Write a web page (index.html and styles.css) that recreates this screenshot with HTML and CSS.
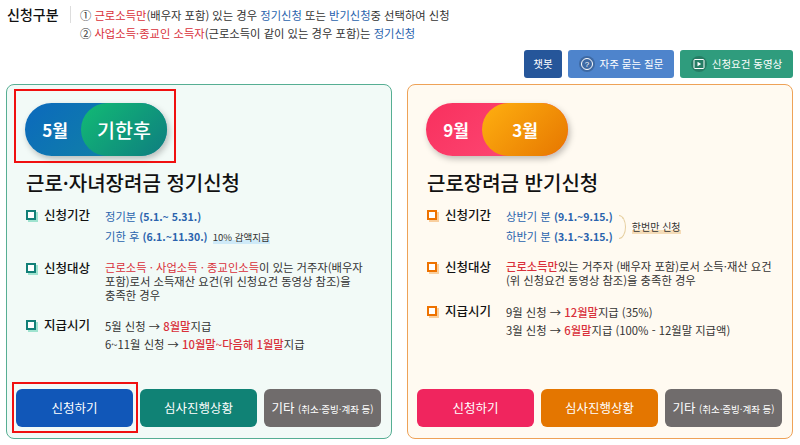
FILE: index.html
```html
<!DOCTYPE HTML>
<html lang="ko">
  <head>
  <title>신청구분</title>
  <meta charset="utf-8">
  <link rel="stylesheet" href="styles.css">
  </head>

  <body>

  <div class="top">
    <div class="topLabel">신청구분</div>
    <div class="topNotes">
      <p>① <span class="red">근로소득만</span>(배우자 포함) 있는 경우 <span class="blue">정기신청</span> 또는 <span class="blue">반기신청</span>중 선택하여 신청</p>
      <p>② <span class="red">사업소득·종교인 소득자</span>(근로소득이 같이 있는 경우 포함)는 <span class="blue">정기신청</span></p>
    </div>
  </div>

  <div class="links">
    <a class="link linkChat">챗봇</a>
    <a class="link linkFaq">
      <span class="linkIcon">
        <svg width="14" height="14" viewBox="0 0 14 14"><circle cx="7" cy="7" r="5.5" fill="none" stroke="#fff" stroke-width="1"/><text x="7" y="10" font-size="8" font-family="Liberation Sans" fill="#fff" text-anchor="middle">?</text></svg>
      </span>
      자주 묻는 질문
    </a>
    <a class="link linkVideo">
      <span class="linkIcon">
        <svg width="14" height="14" viewBox="0 0 14 14"><rect x="2" y="2.5" width="10" height="9" rx="1" fill="none" stroke="#fff" stroke-width="1"/><path d="M5.5 4.8 L9.2 7 L5.5 9.2 Z" fill="#fff"/></svg>
      </span>
      신청요건 동영상
    </a>
  </div>

  <div class="cards">

    <div class="card cardGreen">
      <div class="pill">
        <span class="pillLeft">5월</span>
        <span class="pillRight">기한후</span>
      </div>
      <h2>근로·자녀장려금 정기신청</h2>

      <div class="row rowPeriod">
        <div class="rowLabel">신청기간</div>
        <div class="rowText">
          <p class="gapLine"><span class="blue">정기분 <b>(5.1.~ 5.31.)</b></span></p>
          <p class="gapLine"><span class="blue">기한 후 <b>(6.1.~11.30.)</b></span> <span class="mark markBlue">10% 감액지급</span></p>
        </div>
      </div>

      <div class="row rowTarget">
        <div class="rowLabel">신청대상</div>
        <div class="rowText">
          <p><span class="red">근로소득 · 사업소득 · 종교인소득</span>이 있는 거주자(배우자 포함)로서 소득재산 요건(위 신청요건 동영상 참조)을 충족한 경우</p>
        </div>
      </div>

      <div class="row rowPay">
        <div class="rowLabel">지급시기</div>
        <div class="rowText">
          <p class="payLine">5월 신청 → <span class="red strong">8월말</span>지급</p>
          <p class="payLine">6~11월 신청 → <span class="red strong">10월말~다음해 1월말</span>지급</p>
        </div>
      </div>

      <div class="buttons">
        <a class="btn btnApply">신청하기</a>
        <a class="btn btnStatus">심사진행상황</a>
        <a class="btn btnEtc">기타 <small>(취소·증빙·계좌 등)</small></a>
      </div>

      <div class="highlight highlightPill"></div>
      <div class="highlight highlightBtn"></div>
    </div>

    <div class="card cardOrange">
      <div class="pill">
        <span class="pillLeft">9월</span>
        <span class="pillRight">3월</span>
      </div>
      <h2>근로장려금 반기신청</h2>

      <div class="row rowPeriod">
        <div class="rowLabel">신청기간</div>
        <div class="rowText periodWrap">
          <div>
            <p class="gapLine"><span class="blue">상반기 분 <b>(9.1.~9.15.)</b></span></p>
            <p class="gapLine"><span class="blue">하반기 분 <b>(3.1.~3.15.)</b></span></p>
          </div>
          <span class="brace"></span>
          <span class="mark markOrange">한번만 신청</span>
        </div>
      </div>

      <div class="row rowTarget rowTargetShort">
        <div class="rowLabel">신청대상</div>
        <div class="rowText">
          <p><span class="red strong">근로소득만</span>있는 거주자 (배우자 포함)로서 소득·재산 요건 (위 신청요건 동영상 참조)을 충족한 경우</p>
        </div>
      </div>

      <div class="row rowPay">
        <div class="rowLabel">지급시기</div>
        <div class="rowText">
          <p class="payLine">9월 신청 → <span class="red strong">12월말</span>지급 (35%)</p>
          <p class="payLine">3월 신청 → <span class="red strong">6월말</span>지급 (100% - 12월말 지급액)</p>
        </div>
      </div>

      <div class="buttons">
        <a class="btn btnApply">신청하기</a>
        <a class="btn btnStatus">심사진행상황</a>
        <a class="btn btnEtc">기타 <small>(취소·증빙·계좌 등)</small></a>
      </div>
    </div>

  </div>

  </body>

</html>
```

FILE: styles.css
```css
html {
  height: 100%;
}
body {
  margin: 0;
  padding: 0;
  height: 445px;
  overflow: hidden;
  background: #ffffff;
  color: #333333;
  font-family: "Noto Sans CJK KR", "Noto Sans", sans-serif;
  font-size: 11.3px;
  line-height: 14px;
}

p {
  margin: 0;
}

.red {
  color: #d9303a;
}
.blue {
  color: #2a63ad;
}
.strong {
  font-weight: 500;
}

/* top */
.top {
  display: flex;
  align-items: flex-start;
  height: 50px;
  padding: 6px 0 0 7px;
  box-sizing: border-box;
}
.topLabel {
  width: 63px;
  height: 17px;
  border-right: 1px solid #dddddd;
  color: #111111;
  font-size: 14px;
  font-weight: 500;
  line-height: 17px;
}
.topNotes {
  margin-left: 9px;
  font-size: 11.3px;
  line-height: 18px;
}

/* link buttons */
.links {
  display: flex;
  justify-content: flex-end;
  gap: 6px;
  height: 34px;
  padding-right: 7px;
}
.link {
  display: flex;
  align-items: center;
  justify-content: center;
  gap: 5px;
  height: 28px;
  border-radius: 3px;
  color: #ffffff;
  font-size: 10.5px;
}
.linkChat {
  width: 38px;
  background: #26569a;
}
.linkFaq {
  width: 106px;
  background: #4e84cc;
}
.linkVideo {
  width: 113px;
  background: #2f9c7d;
}
.linkIcon {
  display: flex;
  align-items: center;
  justify-content: center;
  width: 16px;
  height: 16px;
  border-radius: 50%;
  background: rgba(0,0,0,0.2);
}

/* cards */
.cards {
  display: flex;
  gap: 15px;
  padding-left: 6px;
}
.card {
  position: relative;
  display: flex;
  flex-direction: column;
  width: 386px;
  height: 355px;
  box-sizing: border-box;
  padding: 18px 10px 11px 18px;
  border: 1px solid;
  border-radius: 8px;
}
.cardGreen {
  background: #f2faf7;
  border-color: #56ae93;
}
.cardOrange {
  background: #fffaf1;
  border-color: #eea257;
}

.pill {
  display: flex;
  width: 142px;
  height: 53px;
  border-radius: 27px;
  color: #ffffff;
  font-size: 17px;
  font-weight: 700;
  line-height: 53px;
  text-align: center;
  box-shadow: 2px 3px 6px rgba(0,0,0,0.25);
}
.pillLeft {
  width: 56px;
  padding-left: 4px;
  box-sizing: border-box;
}
.pillRight {
  width: 86px;
  border-radius: 27px;
}
.cardGreen .pill {
  background: linear-gradient(135deg, #0b69bd, #138a9e);
}
.cardGreen .pillRight {
  font-size: 19.5px;
  font-weight: 500;
  background: linear-gradient(135deg, #12bb74, #0e7d80);
}
.cardOrange .pill {
  background: linear-gradient(135deg, #f8305e, #ff4f7a);
}
.cardOrange .pillRight {
  background: linear-gradient(135deg, #ffb010, #e67600);
}

h2 {
  margin: 14px 0 0;
  padding-left: 1px;
  color: #111111;
  font-size: 20px;
  font-weight: 500;
  line-height: 26px;
}

.row {
  display: flex;
}
.rowPeriod {
  margin-top: 11px;
}
.rowTarget {
  margin-top: 14px;
}
.rowPay {
  margin-top: 15px;
}
.rowTargetShort {
  margin-top: 13px;
}
.rowTargetShort + .rowPay {
  margin-top: 16px;
}
.rowLabel {
  position: relative;
  width: 80px;
  padding-left: 19px;
  box-sizing: border-box;
  color: #111111;
  font-size: 12.5px;
  font-weight: 500;
  line-height: 16px;
  flex: none;
}
.rowLabel:before {
  content: "";
  position: absolute;
  left: 1px;
  top: 3px;
  width: 6px;
  height: 6px;
  border: 2px solid;
  background: #ffffff;
}
.cardGreen .rowLabel:before {
  border-color: #128078;
  box-shadow: 2px 2px 0 #9fe3cf;
}
.cardOrange .rowLabel:before {
  border-color: #ee7200;
  box-shadow: 2px 2px 0 #f9cf9f;
}
.rowText {
  width: 266px;
  font-size: 11.3px;
  line-height: 14px;
  word-break: keep-all;
}
.rowText b {
  font-size: 10.5px;
  font-weight: 700;
}
.gapLine {
  height: 19.5px;
  line-height: 18px;
  white-space: nowrap;
}
.payLine {
  height: 18px;
  line-height: 18px;
}

.mark {
  font-size: 9.5px;
  color: #333333;
  margin-left: 2px;
}
.markBlue {
  background: linear-gradient(transparent 72%, #cfeaf8 72%);
}
.markOrange {
  margin-left: 6px;
  font-size: 10px;
  background: linear-gradient(transparent 72%, #f5dcb8 72%);
}
.periodWrap {
  display: flex;
  align-items: center;
}
.brace {
  width: 6px;
  height: 22px;
  margin-left: 6px;
  border: 1px solid #e6cfa0;
  border-left: 0;
  border-radius: 0 100% 100% 0 / 0 50% 50% 0;
}

/* bottom buttons */
.buttons {
  display: flex;
  gap: 7px;
  margin-top: auto;
  margin-left: -9px;
}
.btn {
  width: 117px;
  height: 38px;
  border-radius: 6px;
  color: #ffffff;
  font-size: 12.5px;
  line-height: 38px;
  text-align: center;
}
.btn small {
  font-size: 9.5px;
}
.cardGreen .btnApply {
  background: #1157b8;
}
.cardGreen .btnStatus {
  background: #108275;
}
.cardOrange .btnApply {
  background: #f0255e;
}
.cardOrange .btnStatus {
  background: #e47600;
}
.btnEtc {
  background: #706c6c;
}

.highlight {
  position: absolute;
  box-sizing: border-box;
  border: 2px solid #f01010;
  pointer-events: none;
}
.highlightPill {
  left: 7px;
  top: 4px;
  width: 162px;
  height: 74px;
}
.highlightBtn {
  left: 5px;
  top: 297px;
  width: 126px;
  height: 51px;
}
```
